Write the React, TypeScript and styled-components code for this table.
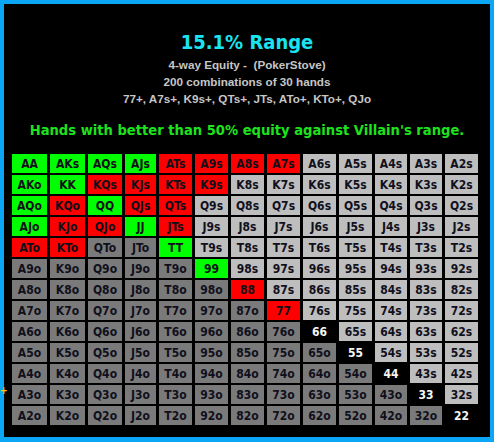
import React from "react";
import styled, { createGlobalStyle } from "styled-components";

const Global = createGlobalStyle`
  html, body { margin: 0; padding: 0; background: #000; }
  #root { width: 494px; height: 442px; }
`;

const FONT = `"DejaVu Sans Condensed", "DejaVu Sans", Verdana, sans-serif`;
const SUBFONT = `"Liberation Sans", Arial, sans-serif`;

const Frame = styled.div`
  position: relative;
  box-sizing: border-box;
  width: 494px;
  height: 442px;
  border: 4px solid #0ca6f6;
  border-bottom-width: 5px;
  background: #000;
  padding: 27px 0 0 8px;
  display: flex;
  flex-direction: column;
  font-family: ${FONT};
  font-stretch: condensed;
`;

const Header = styled.div`
  display: flex;
  flex-direction: column;
  align-items: center;
  padding-right: 8px;
  white-space: nowrap;
`;

const Title = styled.div`
  color: #1be4f2;
  font-weight: bold;
  font-size: 20px;
  line-height: 23px;
  margin-bottom: 2px;
`;

const Sub = styled.div`
  color: #c6c6c6;
  font-family: ${SUBFONT};
  font-stretch: normal;
  font-weight: bold;
  font-size: 11.7px;
  line-height: 17px;
`;

const Highlight = styled.div`
  color: #1ee21e;
  font-weight: bold;
  font-size: 14.6px;
  line-height: 20px;
  margin-top: 13px;
`;

const Grid = styled.div`
  margin-top: 14px;
  display: grid;
  grid-template-columns: 35px 35px 34px 31px 33px 33px 33px 33px 33px 33px 32px 32px 33px;
  grid-auto-rows: 19px;
  column-gap: 3px;
  row-gap: 2px;
`;

type Kind = "green" | "red" | "light" | "dark" | "black";

const bg: Record<Kind, string> = {
  green: "#00ff00",
  red: "#ff0000",
  light: "#bebebe",
  dark: "#7a7a7a",
  black: "#000000",
};

const Cell = styled.div<{ $kind: Kind }>`
  background: ${(p) => bg[p.$kind]};
  color: ${(p) => (p.$kind === "black" ? "#f4f4f4" : "#10101c")};
  font-weight: bold;
  font-size: 12px;
  display: flex;
  align-items: center;
  justify-content: center;
  white-space: nowrap;
`;

const Mark = styled.span`
  position: absolute;
  left: -4px;
  top: 382px;
  color: #ffcc00;
  font-size: 10px;
  font-weight: bold;
  line-height: 10px;
`;

const ranks = ["A", "K", "Q", "J", "T", "9", "8", "7", "6", "5", "4", "3", "2"];

const green = new Set(["AA", "AKs", "AQs", "AJs", "AKo", "KK", "AQo", "QQ", "AJo", "JJ", "TT", "99"]);
const red = new Set([
  "ATs", "A9s", "A8s", "A7s", "KQs", "KJs", "KTs", "K9s", "KQo", "QJs", "QTs",
  "KJo", "QJo", "JTs", "ATo", "KTo", "88", "77",
]);

function handAt(i: number, j: number): string {
  if (i === j) return ranks[i] + ranks[j];
  if (j > i) return ranks[i] + ranks[j] + "s";
  return ranks[j] + ranks[i] + "o";
}

function kindOf(i: number, j: number, h: string): Kind {
  if (green.has(h)) return "green";
  if (red.has(h)) return "red";
  if (i === j) return "black";
  return j > i ? "light" : "dark";
}

export default function App() {
  const cells: React.ReactNode[] = [];
  for (let i = 0; i < 13; i++) {
    for (let j = 0; j < 13; j++) {
      const h = handAt(i, j);
      cells.push(
        <Cell key={h} $kind={kindOf(i, j, h)}>
          {h}
        </Cell>
      );
    }
  }
  return (
    <>
      <Global />
      <Frame>
        <Header>
          <Title>15.1% Range</Title>
          <Sub>4-way Equity -&nbsp; (PokerStove)</Sub>
          <Sub>200 combinations of 30 hands</Sub>
          <Sub>77+, A7s+, K9s+, QTs+, JTs, ATo+, KTo+, QJo</Sub>
          <Highlight>Hands with better than 50% equity against Villain's range.</Highlight>
        </Header>
        <Grid>{cells}</Grid>
        <Mark>+</Mark>
      </Frame>
    </>
  );
}
